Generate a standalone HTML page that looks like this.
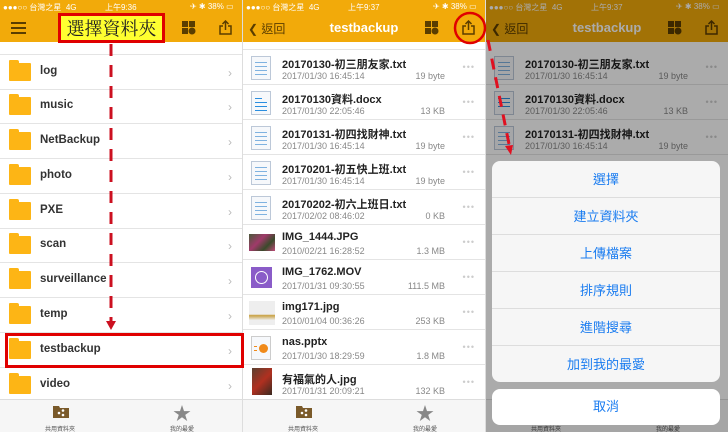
<!DOCTYPE html>
<html><head><meta charset="utf-8"><style>
*{margin:0;padding:0;box-sizing:border-box}
body{width:728px;height:432px;overflow:hidden;background:#fff;position:relative;font-family:"Liberation Sans","Noto Sans CJK TC",sans-serif}
.p{position:absolute;top:0;height:432px;width:242px;overflow:hidden;background:#fff}
.sb{position:absolute;left:0;top:0;width:100%;height:14px;background:#f2aa0a;font-size:8px;color:#fff;}
.sb span{position:absolute;top:2px}
.nb{position:absolute;left:0;top:14px;width:100%;height:28px;background:#f2aa0a;}
.row{position:absolute;left:0;width:100%;height:35px;border-bottom:1px solid #e4e4e4}
.fold{position:absolute;left:9px;top:8px;width:22px;height:18px;background:#fdb515;border-radius:1px}
.fold:before{content:"";position:absolute;left:0;top:-3px;width:10px;height:4px;background:#fdb515;border-radius:1px 2px 0 0}
.fn{position:absolute;left:40px;top:10px;font-size:11.5px;font-weight:bold;color:#333}
.chev{position:absolute;right:10px;top:11px;color:#bbb;font-size:12px}
.nm{position:absolute;left:39px;top:6px;font-size:11px;font-weight:bold;color:#222;white-space:nowrap}
.mt{position:absolute;left:39px;top:21px;font-size:9px;color:#888}
.sz{position:absolute;right:40px;top:21px;font-size:9px;color:#888}
.dt{position:absolute;right:10px;top:12px;color:#ccc;font-size:9px;letter-spacing:1px}
.ic{position:absolute;left:8px;top:6px;width:20px;height:24px;border:1px solid #bcc8d8;background:#f6f8fb}
.ic i{position:absolute;left:3px;right:3px;height:1px;background:#7fb2e0}
.tb{position:absolute;left:0;top:399px;width:100%;height:33px;background:#f6f6f6;border-top:1px solid #ddd}
.tl{position:absolute;font-size:6px;color:#555;top:24px}
.ttl{position:absolute;top:6px;width:100%;text-align:center;color:#fff;font-weight:bold;font-size:13px}
.back{position:absolute;left:5px;top:6px;color:#5a3d00;font-size:12px}
.ib{position:absolute;top:6px;width:15px;height:15px}
.as{position:absolute;left:6px;width:228px;background:rgba(248,248,248,0.97);border-radius:8px}
.as div{height:37px;line-height:37px;text-align:center;color:#1a7cf0;font-size:13px;border-bottom:1px solid #ddd}
</style></head><body>

<!-- Panel 1 -->
<div class="p" style="left:0">
<div class="sb"><span style="left:3px">●●●○○ 台灣之星 &nbsp;4G</span><span style="left:105px">上午9:36</span><span style="left:190px">✈ ✱ 38% ▭</span></div>
<div class="nb">
 <div style="position:absolute;left:11px;top:8px;width:15px;height:2px;background:#5a3d00;box-shadow:0 5px 0 #5a3d00,0 10px 0 #5a3d00"></div>
 <svg class="ib" style="left:181px" viewBox="0 0 15 15"><rect x="1" y="1" width="6" height="6" fill="#5a3d00"/><rect x="8" y="1" width="6" height="6" fill="#5a3d00"/><rect x="1" y="8" width="6" height="6" fill="#5a3d00"/><circle cx="11" cy="11" r="3.5" fill="#5a3d00"/></svg>
 <svg class="ib" style="left:218px" viewBox="0 0 15 15" fill="none" stroke="#5a3d00" stroke-width="1.5"><path d="M5 6H2v8h11V6h-3M7.5 10V1M4.5 4l3-3 3 3"/></svg>
</div>
<div class="row" style="top:42px;height:13px"></div>
<div class="row" style="top:55px"><div class="fold"></div><div class="fn">log</div><div class="chev">›</div></div>
<div class="row" style="top:89px"><div class="fold"></div><div class="fn">music</div><div class="chev">›</div></div>
<div class="row" style="top:124px"><div class="fold"></div><div class="fn">NetBackup</div><div class="chev">›</div></div>
<div class="row" style="top:159px"><div class="fold"></div><div class="fn">photo</div><div class="chev">›</div></div>
<div class="row" style="top:194px"><div class="fold"></div><div class="fn">PXE</div><div class="chev">›</div></div>
<div class="row" style="top:228px"><div class="fold"></div><div class="fn">scan</div><div class="chev">›</div></div>
<div class="row" style="top:263px"><div class="fold"></div><div class="fn">surveillance</div><div class="chev">›</div></div>
<div class="row" style="top:298px"><div class="fold"></div><div class="fn">temp</div><div class="chev">›</div></div>
<div class="row" style="top:333px"><div class="fold"></div><div class="fn">testbackup</div><div class="chev">›</div></div>
<div class="row" style="top:368px"><div class="fold"></div><div class="fn">video</div><div class="chev">›</div></div>
<div class="tb">
 <svg style="position:absolute;left:53px;top:4px" width="16" height="14" viewBox="0 0 16 14"><path d="M0 2h6l1 2h9v10H0z" fill="#7a5a2a"/><circle cx="6" cy="9" r="1.3" fill="#fff"/><circle cx="10" cy="6.5" r="1.3" fill="#fff"/><circle cx="10" cy="11" r="1.3" fill="#fff"/></svg>
 <div class="tl" style="left:45px">共用資料夾</div>
 <div style="position:absolute;left:173px;top:0;font-size:18px;color:#888">★</div>
 <div class="tl" style="left:170px">我的最愛</div>
</div>
</div>
<div style="position:absolute;left:242px;top:0;width:1px;height:432px;background:#ddd"></div>

<!-- Panel 2 & 3 content template -->
<div class="p" style="left:243px" id="p2">
<div class="sb"><span style="left:3px">●●●○○ 台灣之星 &nbsp;4G</span><span style="left:105px">上午9:37</span><span style="left:190px">✈ ✱ 38% ▭</span></div>
<div class="nb">
 <div class="back">❮ 返回</div><div class="ttl">testbackup</div>
 <svg class="ib" style="left:181px" viewBox="0 0 15 15"><rect x="1" y="1" width="6" height="6" fill="#5a3d00"/><rect x="8" y="1" width="6" height="6" fill="#5a3d00"/><rect x="1" y="8" width="6" height="6" fill="#5a3d00"/><circle cx="11" cy="11" r="3.5" fill="#5a3d00"/></svg>
 <svg class="ib" style="left:218px" viewBox="0 0 15 15" fill="none" stroke="#5a3d00" stroke-width="1.5"><path d="M5 6H2v8h11V6h-3M7.5 10V1M4.5 4l3-3 3 3"/></svg>
</div>
<div class="row" style="top:42px;height:8px"></div>
<div class="row" style="top:50px"><div class="ic"><i style="top:5px"></i><i style="top:9px"></i><i style="top:13px"></i><i style="top:17px"></i></div><div class="nm">20170130-初三朋友家.txt</div><div class="mt">2017/01/30 16:45:14</div><div class="sz">19 byte</div><div class="dt">•••</div></div>
<div class="row" style="top:85px"><div class="ic"><i style="top:6px;right:8px;background:#2a8ee0"></i><i style="top:10px;background:#2a8ee0"></i><i style="top:14px;background:#2a8ee0"></i><i style="top:18px;background:#2a8ee0"></i></div><div class="nm">20170130資料.docx</div><div class="mt">2017/01/30 22:05:46</div><div class="sz">13 KB</div><div class="dt">•••</div></div>
<div class="row" style="top:120px"><div class="ic"><i style="top:5px"></i><i style="top:9px"></i><i style="top:13px"></i><i style="top:17px"></i></div><div class="nm">20170131-初四找財神.txt</div><div class="mt">2017/01/30 16:45:14</div><div class="sz">19 byte</div><div class="dt">•••</div></div>
<div class="row" style="top:155px"><div class="ic"><i style="top:5px"></i><i style="top:9px"></i><i style="top:13px"></i><i style="top:17px"></i></div><div class="nm">20170201-初五快上班.txt</div><div class="mt">2017/01/30 16:45:14</div><div class="sz">19 byte</div><div class="dt">•••</div></div>
<div class="row" style="top:190px"><div class="ic"><i style="top:5px"></i><i style="top:9px"></i><i style="top:13px"></i><i style="top:17px"></i></div><div class="nm">20170202-初六上班日.txt</div><div class="mt">2017/02/02 08:46:02</div><div class="sz">0 KB</div><div class="dt">•••</div></div>
<div class="row" style="top:225px"><div style="position:absolute;left:6px;top:9px;width:26px;height:17px;background:linear-gradient(135deg,#4a5a3a,#a03a6a 40%,#3a4a2a 70%,#c04a7a)"></div><div class="nm">IMG_1444.JPG</div><div class="mt">2010/02/21 16:28:52</div><div class="sz">1.3 MB</div><div class="dt">•••</div></div>
<div class="row" style="top:260px"><div style="position:absolute;left:8px;top:7px;width:21px;height:21px;background:#8a5cc8"><div style="position:absolute;left:4px;top:4px;width:13px;height:13px;border:1.5px solid #fff;border-radius:50%"></div></div><div class="nm">IMG_1762.MOV</div><div class="mt">2017/01/31 09:30:55</div><div class="sz">111.5 MB</div><div class="dt">•••</div></div>
<div class="row" style="top:295px"><div style="position:absolute;left:6px;top:6px;width:26px;height:24px;background:linear-gradient(#eee 55%,#c8a040 60%,#eee 80%)"></div><div class="nm">img171.jpg</div><div class="mt">2010/01/04 00:36:26</div><div class="sz">253 KB</div><div class="dt">•••</div></div>
<div class="row" style="top:330px"><div class="ic" style="border-color:#ccc"><div style="position:absolute;left:7px;top:7px;width:9px;height:9px;border-radius:50%;background:#f08a1a"></div><i style="top:9px;left:2px;right:13px;background:#f08a1a"></i><i style="top:13px;left:2px;right:13px;background:#f08a1a"></i></div><div class="nm">nas.pptx</div><div class="mt">2017/01/30 18:29:59</div><div class="sz">1.8 MB</div><div class="dt">•••</div></div>
<div class="row" style="top:365px"><div style="position:absolute;left:9px;top:3px;width:20px;height:27px;background:linear-gradient(135deg,#5a4030,#b03020 50%,#3a2a20)"></div><div class="nm">有福氣的人.jpg</div><div class="mt">2017/01/31 20:09:21</div><div class="sz">132 KB</div><div class="dt">•••</div></div>
<div class="tb">
 <svg style="position:absolute;left:53px;top:4px" width="16" height="14" viewBox="0 0 16 14"><path d="M0 2h6l1 2h9v10H0z" fill="#7a5a2a"/><circle cx="6" cy="9" r="1.3" fill="#fff"/><circle cx="10" cy="6.5" r="1.3" fill="#fff"/><circle cx="10" cy="11" r="1.3" fill="#fff"/></svg>
 <div class="tl" style="left:45px">共用資料夾</div>
 <div style="position:absolute;left:173px;top:0;font-size:18px;color:#888">★</div>
 <div class="tl" style="left:170px">我的最愛</div>
</div>
</div>
<div style="position:absolute;left:485px;top:0;width:1px;height:432px;background:#ddd"></div>

<!-- Panel 3 -->
<div class="p" style="left:486px">
<div class="sb"><span style="left:3px">●●●○○ 台灣之星 &nbsp;4G</span><span style="left:105px">上午9:37</span><span style="left:190px">✈ ✱ 38% ▭</span></div>
<div class="nb"><div class="back">❮ 返回</div><div class="ttl">testbackup</div>
 <svg class="ib" style="left:181px" viewBox="0 0 15 15"><rect x="1" y="1" width="6" height="6" fill="#5a3d00"/><rect x="8" y="1" width="6" height="6" fill="#5a3d00"/><rect x="1" y="8" width="6" height="6" fill="#5a3d00"/><circle cx="11" cy="11" r="3.5" fill="#5a3d00"/></svg>
 <svg class="ib" style="left:218px" viewBox="0 0 15 15" fill="none" stroke="#5a3d00" stroke-width="1.5"><path d="M5 6H2v8h11V6h-3M7.5 10V1M4.5 4l3-3 3 3"/></svg></div>
<div class="row" style="top:50px"><div class="ic"><i style="top:5px"></i><i style="top:9px"></i><i style="top:13px"></i><i style="top:17px"></i></div><div class="nm">20170130-初三朋友家.txt</div><div class="mt">2017/01/30 16:45:14</div><div class="sz">19 byte</div><div class="dt">•••</div></div>
<div class="row" style="top:85px"><div class="ic"><i style="top:6px;background:#2a8ee0"></i><i style="top:10px;background:#2a8ee0"></i><i style="top:14px;background:#2a8ee0"></i></div><div class="nm">20170130資料.docx</div><div class="mt">2017/01/30 22:05:46</div><div class="sz">13 KB</div><div class="dt">•••</div></div>
<div class="row" style="top:120px"><div class="ic"><i style="top:5px"></i><i style="top:9px"></i><i style="top:13px"></i><i style="top:17px"></i></div><div class="nm">20170131-初四找財神.txt</div><div class="mt">2017/01/30 16:45:14</div><div class="sz">19 byte</div><div class="dt">•••</div></div>
<div class="tb"><div class="tl" style="left:45px">共用資料夾</div><div class="tl" style="left:170px">我的最愛</div></div>
<div style="position:absolute;left:0;top:0;width:100%;height:100%;background:rgba(0,0,0,0.33)"></div>
<div class="as" style="top:161px;height:221px"><div>選擇</div><div>建立資料夾</div><div>上傳檔案</div><div>排序規則</div><div>進階搜尋</div><div style="border:0">加到我的最愛</div></div>
<div class="as" style="top:389px;height:36px;background:#fff"><div style="border:0;height:36px;line-height:36px">取消</div></div>
</div>

<!-- annotations -->
<div style="position:absolute;left:58px;top:13px;width:107px;height:30px;border:3px solid #e00000;background:#ffff30;font-family:'Noto Serif CJK SC','Liberation Serif',serif;font-size:18px;line-height:24px;text-align:center;color:#222">選擇資料夾</div>
<svg style="position:absolute;left:0;top:0" width="728" height="432">
<line x1="111" y1="44" x2="111" y2="322" stroke="#cc1020" stroke-width="3" stroke-dasharray="12,9"/>
<path d="M106 321h10l-5 9z" fill="#cc1020"/>
<rect x="6.5" y="334.5" width="236" height="32" fill="none" stroke="#e00000" stroke-width="3"/>
<circle cx="470" cy="28" r="15" fill="none" stroke="#e00000" stroke-width="2.5"/>
<line x1="488" y1="40" x2="509" y2="144" stroke="#e01020" stroke-width="3" stroke-dasharray="11,8"/>
<path d="M505 146l8-1-2 10z" fill="#e01020"/>
</svg>
</body></html>
